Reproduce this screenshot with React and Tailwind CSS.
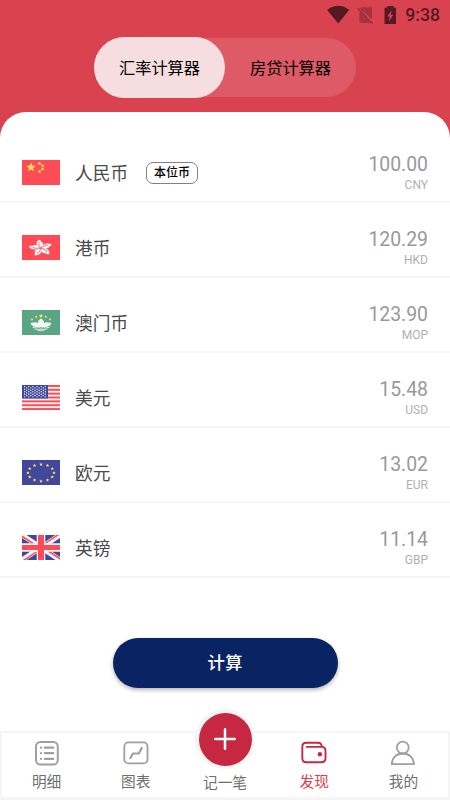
import React from "react";

const star = (cx, cy, r, rot = 0) =>
  Array.from({ length: 10 }, (_, i) => {
    const a = ((i * 36 - 90 + rot) * Math.PI) / 180;
    const q = i % 2 ? r * 0.45 : r;
    return `${(cx + q * Math.cos(a)).toFixed(2)},${(cy + q * Math.sin(a)).toFixed(2)}`;
  }).join(" ");

function Flag({ children, bg }) {
  return (
    <svg viewBox="0 0 38 25" className="block h-[25px] w-[38px] shrink-0">
      <rect width="38" height="25" fill={bg} />
      {children}
    </svg>
  );
}

const ChinaFlag = () => (
  <Flag bg="#ff4b55">
    <polygon points={star(9, 7.4, 4.9)} fill="#ffe15a" />
    {[[17.6, 3.6], [20.6, 5.7], [20.6, 9], [17.6, 11.4]].map(([x, y], i) => (
      <polygon key={i} points={star(x, y, 2, i * 20)} fill="#ffe15a" />
    ))}
  </Flag>
);

const HongKongFlag = () => (
  <Flag bg="#ff4b55">
    <g transform="translate(18.8 13) scale(1.38 .95)">
      {[0, 72, 144, 216, 288].map((a) => (
        <g key={a} transform={`rotate(${a - 4})`}>
          <path d="M0 -.6C-3.4 -2.4 -3.8 -7 -.3 -8.8C1 -7.9 .1 -6.9 1.3 -6C2.8 -4.5 2.2 -2 0 -.6Z" fill="#f8f5f5" />
          <path d="M0 -.6C-1.4 -2.6 -1.5 -4.6 -.6 -6" fill="none" stroke="#ff4b55" strokeWidth=".6" />
        </g>
      ))}
    </g>
  </Flag>
);

const MacauFlag = () => (
  <Flag bg="#5aa587">
    <polygon points={star(19, 5.9, 2.2)} fill="#ffe15a" />
    {[[14.2, 6.9], [23.8, 6.9], [10, 9.4], [28, 9.4]].map(([x, y], i) => (
      <polygon key={i} points={star(x, y, 1.6)} fill="#ffe15a" />
    ))}
    <path d="M19 8.4C20.8 9.2 22.2 10.9 22 13.2C23.2 12.2 25 12 26 12.7C27 12.3 28.5 12.5 29.4 13.2C28.6 15.5 27 16.6 24.8 16.9H13.2C11 16.6 9.4 15.5 8.6 13.2C9.5 12.5 11 12.3 12 12.7C13 12 14.8 12.2 16 13.2C15.8 10.9 17.2 9.2 19 8.4Z" fill="#f5f5f5" />
    <path d="M10.5 17.3Q14.5 18.3 16.8 17.6Q19 18.8 21.2 17.6Q23.5 18.3 27.5 17.3M12.5 19Q19 20.3 25.5 19M15.5 20.4Q19 21.2 22.5 20.4" fill="none" stroke="#dcebe5" strokeWidth=".9" />
  </Flag>
);

const UsaFlag = () => (
  <Flag bg="#f5f5f5">
    {Array.from({ length: 7 }, (_, i) => (
      <rect key={i} y={(i * 50) / 13} width="38" height={25 / 13} fill="#ff4b55" />
    ))}
    <rect width="26" height="13.46" fill="#41479b" />
    {Array.from({ length: 9 }, (_, r) =>
      Array.from({ length: r % 2 ? 5 : 6 }, (_, c) => (
        <circle key={`${r}-${c}`} cx={2.6 + c * 4.15 + (r % 2 ? 2.07 : 0)} cy={1.6 + r * 1.28} r=".7" fill="#f5f5f5" />
      ))
    )}
  </Flag>
);

const EuroFlag = () => (
  <Flag bg="#41479b">
    {Array.from({ length: 12 }, (_, i) => {
      const a = (i * Math.PI) / 6;
      return <polygon key={i} points={star(19 + 13 * Math.sin(a), 12.8 - 8.4 * Math.cos(a), 1.85)} fill="#ffe15a" />;
    })}
  </Flag>
);

const UkFlag = () => (
  <Flag bg="#41479b">
    <path d="M0 0L38 25M38 0L0 25" stroke="#f5f5f5" strokeWidth="5" />
    <path d="M-1 .6L17 12.5M39 24.4L21 12.5M37 -.8L20 10.5M1 25.8L18 14.5" stroke="#ff4b55" strokeWidth="1.5" />
    <path d="M19 0V25M0 12.5H38" stroke="#f5f5f5" strokeWidth="8.6" />
    <path d="M19 0V25" stroke="#ff4b55" strokeWidth="6" />
    <path d="M0 12.5H38" stroke="#ff4b55" strokeWidth="5" />
  </Flag>
);

const currencies = [
  { name: "人民币", value: "100.00", code: "CNY", flag: <ChinaFlag />, base: true },
  { name: "港币", value: "120.29", code: "HKD", flag: <HongKongFlag /> },
  { name: "澳门币", value: "123.90", code: "MOP", flag: <MacauFlag /> },
  { name: "美元", value: "15.48", code: "USD", flag: <UsaFlag /> },
  { name: "欧元", value: "13.02", code: "EUR", flag: <EuroFlag /> },
  { name: "英镑", value: "11.14", code: "GBP", flag: <UkFlag /> },
];

function StatusBar() {
  return (
    <div className="flex h-[30px] items-center justify-end pr-[10px] text-[#551923]">
      <svg viewBox="0 0 78 30" className="h-[30px] w-[78px]">
        <path d="M9.2 9.9Q20.2 1.5 31.2 9.9L20.2 23.4Z" fill="currentColor" />
        <path d="M43.5 7.2H54V19.6L42 8.8ZM41.3 10.8L53.3 23H41.3Z" fill="currentColor" opacity=".38" />
        <path d="M39.6 8L54.8 23.8" stroke="currentColor" strokeWidth="1.2" opacity=".5" />
        <path fillRule="evenodd" d="M69.2 6H75.7V7.8H78V24H66.5V7.8H69.2ZM73.6 10.5L69.2 16.6H71.8L70.8 21.5L75.3 14.8H72.7Z" fill="currentColor" />
      </svg>
      <span className="ml-[9px] pt-[2px] text-[17.7px] font-medium leading-none">9:38</span>
    </div>
  );
}

function ListIcon() {
  return (
    <svg viewBox="0 0 26 26" className="h-[26px] w-[26px]" fill="none" stroke="currentColor" strokeWidth="2" strokeLinecap="round">
      <rect x="2" y="1.9" width="21.8" height="22.6" rx="4.5" />
      <path d="M10.8 7.7H19.3M10.8 13.2H19.3M10.8 18.8H19.3M6.9 7.7H7M6.9 13.2H7M6.9 18.8H7" strokeWidth="2.2" />
    </svg>
  );
}

function ChartIcon() {
  return (
    <svg viewBox="0 0 26 26" className="h-[26px] w-[26px]" fill="none" stroke="currentColor" strokeWidth="1.8" strokeLinecap="round" strokeLinejoin="round">
      <rect x="1.3" y="2.4" width="23.2" height="21" rx="4" />
      <path d="M7.4 18L10 13.5H15.8L18.8 8" strokeWidth="2.2" />
    </svg>
  );
}

function WalletIcon() {
  return (
    <svg viewBox="0 0 26 26" className="h-[26px] w-[26px]" fill="none" stroke="currentColor" strokeWidth="1.9" strokeLinecap="round" strokeLinejoin="round">
      <path d="M20.8 6.9C20.6 3.9 19.3 2.7 17 2.7H5.2C2.5 2.7 1.3 4.2 1.3 6.8V18.3C1.3 21 2.7 22.3 5.3 22.3H20.2C23 22.3 24.5 21 24.5 18.3V10.8C24.5 8.2 23 6.9 20.7 6.9H5.8" />
      <circle cx="18.9" cy="14.3" r="2.2" fill="currentColor" stroke="none" />
    </svg>
  );
}

function UserIcon() {
  return (
    <svg viewBox="0 0 26 26" className="h-[26px] w-[26px]" fill="none" stroke="currentColor" strokeWidth="1.8" strokeLinejoin="round">
      <circle cx="12.8" cy="7.6" r="5.9" />
      <path d="M1.8 24.2C2 17.7 6.5 13.5 12.8 13.5S23.7 17.7 23.9 24.2Z" />
    </svg>
  );
}

function NavItem({ icon, label, active }) {
  return (
    <div className={`flex flex-1 flex-col items-center pt-[7px] ${active ? "text-[#c62842]" : "text-[#9f9f9f]"}`}>
      {icon}
      <span className={`mt-[6px] text-[14.7px] leading-[20px] ${active ? "text-[#dc3c4c]" : "text-[#6f6f6f]"}`}>{label}</span>
    </div>
  );
}

export default function App() {
  return (
    <div className="flex h-[800px] w-[450px] flex-col overflow-hidden bg-[#d9434f] font-['Roboto','Noto_Sans_CJK_SC',sans-serif]">
      <StatusBar />
      <div className="mx-auto mt-[8px] flex h-[59px] w-[262px] items-center rounded-full bg-[#dd5a66] text-[16.2px] text-black">
        <div className="flex h-[61px] w-[131px] items-center justify-center rounded-full bg-[#f6dde0] pt-[3px]">汇率计算器</div>
        <div className="flex flex-1 items-center justify-center pt-[3px]">房贷计算器</div>
      </div>

      <main className="mt-[15px] flex flex-1 flex-col rounded-t-[26px] bg-white pt-[16px]">
        {currencies.map((c) => (
          <div key={c.code} className="flex h-[75px] items-center border-b-2 border-[#f5f5f5] pl-[22px] pr-[22px] pt-[16px]">
            {c.flag}
            <span className="ml-[15px] pt-[2px] text-[17.7px] leading-[26px] text-[#4a4a4a]">{c.name}</span>
            {c.base && (
              <span className="ml-[18px] flex h-[22px] w-[52px] items-center justify-center rounded-[7px] border border-[#808080] pt-px text-[12px] font-medium leading-none text-black">
                本位币
              </span>
            )}
            <div className="ml-auto flex flex-col items-end pb-[2px]">
              <span className="pt-[2px] text-[19.4px] leading-[24px] text-[#999999]">{c.value}</span>
              <span className="text-[12px] leading-[16px] text-[#b0b0b0]">{c.code}</span>
            </div>
          </div>
        ))}
        <button className="mx-auto mt-[60px] h-[50px] w-[225px] rounded-full bg-[#0a2463] text-[17.4px] font-medium text-white shadow-[0_2px_4px_rgba(0,0,0,0.3)]">
          计算
        </button>
      </main>

      <nav className="flex h-[69px] border-x-2 border-b-[3px] border-t-2 border-[#f5f5f5] bg-white">
        <NavItem icon={<ListIcon />} label="明细" />
        <NavItem icon={<ChartIcon />} label="图表" />
        <div className="relative flex flex-1 flex-col items-center pt-[40px]">
          <div className="absolute -top-[24px] left-1/2 flex h-[60px] w-[60px] -translate-x-1/2 items-center justify-center rounded-full bg-[#f5f5f5]">
            <div className="flex h-[53px] w-[53px] items-center justify-center rounded-full bg-[#c62842]">
              <svg viewBox="0 0 24 24" className="h-[24px] w-[24px]" stroke="white" strokeWidth="2.5" strokeLinecap="round">
                <path d="M12 2.3V21.7M2.3 12H21.7" />
              </svg>
            </div>
          </div>
          <span className="text-[14.7px] leading-[20px] text-[#6f6f6f]">记一笔</span>
        </div>
        <NavItem icon={<WalletIcon />} label="发现" active />
        <NavItem icon={<UserIcon />} label="我的" />
      </nav>
    </div>
  );
}
